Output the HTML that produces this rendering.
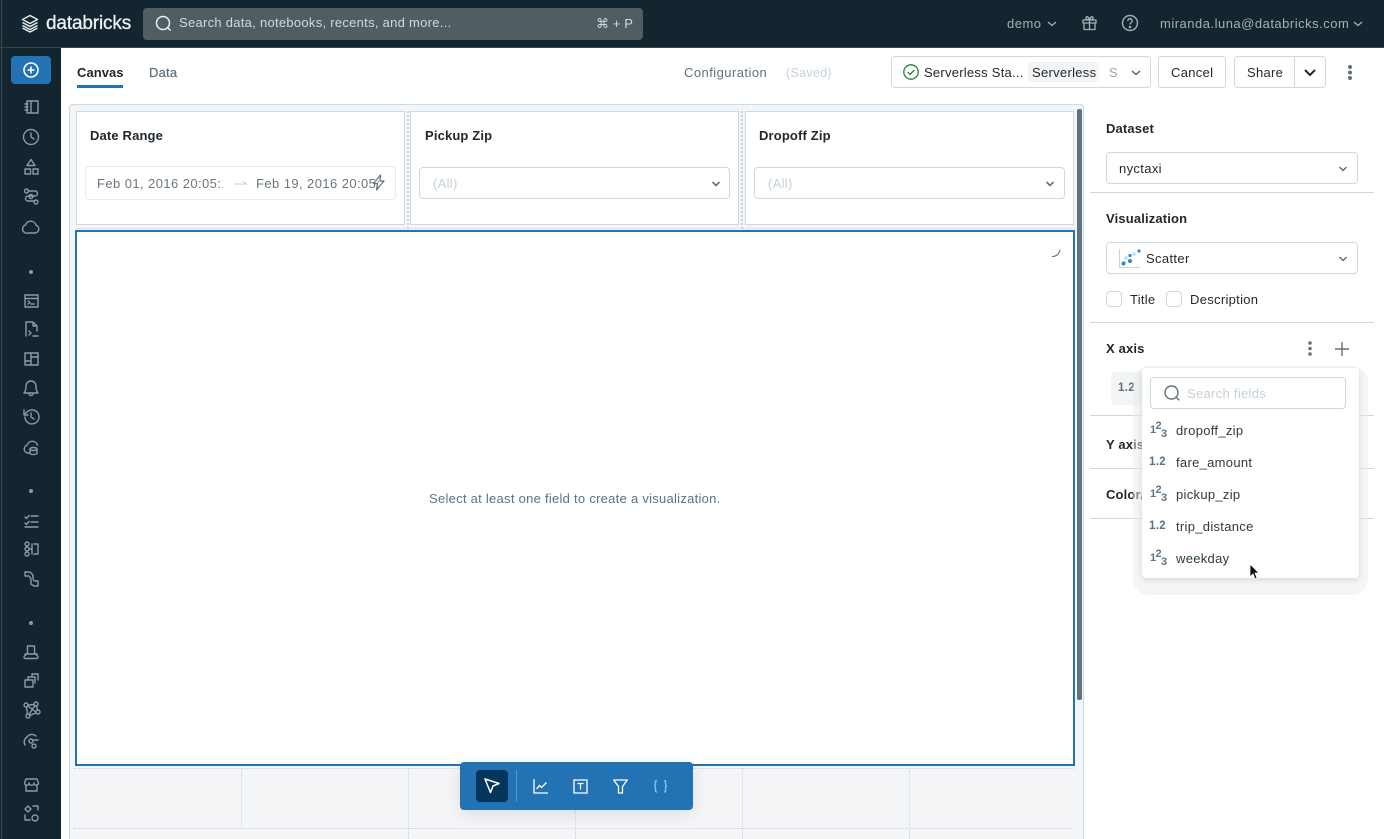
<!DOCTYPE html>
<html><head><meta charset="utf-8"><style>
*{box-sizing:border-box}
html,body{margin:0;padding:0;width:1384px;height:839px;overflow:hidden;background:#fff;font-family:"Liberation Sans",sans-serif;font-size:13px;color:#11171c}
#root{position:relative;width:1384px;height:839px;overflow:hidden;background:#fff}
.a{position:absolute}
.t{position:absolute;white-space:nowrap;line-height:16px;letter-spacing:.3px}
.b{font-weight:700;letter-spacing:.15px}
.box{position:absolute;background:#fff;border:1px solid #cbd9e6;border-radius:4px}
svg{position:absolute;overflow:visible}
.si{fill:none;stroke:#8a9ba8;stroke-width:1.4;stroke-linecap:round;stroke-linejoin:round}
.f{color:#2b3a44}
.hl{position:absolute;height:1px;background:#cbd9e6;left:1090px;width:284px}
.vd{position:absolute;width:0;border-left:1px dotted #cdd3d9}
.hd{position:absolute;height:0;border-top:1px dotted #cdd3d9}
</style></head><body><div id="root">
<div class="a" style="left:0;top:0;width:1384px;height:47px;background:#13262f"></div>
<div class="a" style="left:0;top:47px;width:1384px;height:1px;background:#33454d"></div>
<div class="a" style="left:0;top:48px;width:61px;height:791px;background:#13262f"></div>
<div class="a" style="left:1px;top:0;width:1px;height:839px;background:#3c4c54"></div>

<!-- logo -->
<svg style="left:21px;top:14px" width="20" height="20" viewBox="0 0 20 20" fill="none" stroke="#e8ecef" stroke-width="1.5" stroke-linejoin="round"><path d="M1.5 5.5 9 1.500l7.500 4L9 9.500z"/><path d="M1.500 8.500 9 12.500l7.500-4M1.500 11.500 9 15.500l7.500-4M1.500 14 9 18l7.500-4"/></svg>
<div class="t" style="left:46px;top:12px;font-size:19px;line-height:24px;color:#eef1f3;letter-spacing:-.15px;-webkit-text-stroke:.3px #eef1f3">databricks</div>

<!-- search -->
<div class="a" style="left:143px;top:8px;width:500px;height:32px;background:#505d62;border-radius:4px"></div>
<svg style="left:155px;top:15px" width="18" height="18" viewBox="0 0 18 18" fill="none" stroke="#eef1f3" stroke-width="1.5"><circle cx="8" cy="8" r="6.500"/><path d="m12.600 12.600 3 3"/></svg>
<div class="t" style="left:179px;top:15px;color:#d4d9dc;letter-spacing:.28px">Search data, notebooks, recents, and more...</div>
<div class="t" style="left:596px;top:16px;color:#d4d9dc;letter-spacing:.1px;font-family:'Liberation Sans','DejaVu Sans',sans-serif">⌘ + P</div>

<!-- right header -->
<div class="t" style="left:1007px;top:16px;color:#a3b0b8;letter-spacing:.5px">demo</div>
<svg style="left:1047px;top:21px" width="10" height="6" fill="none" stroke="#a3b0b8" stroke-width="1.300"><path d="m1 1 4 3.500L9 1"/></svg>
<svg style="left:1082px;top:15px" width="16" height="16" viewBox="0 0 16 16" fill="none" stroke="#a3b0b8" stroke-width="1.300"><path d="M1 5h13v3H1zM2 8v6.500h11V8M7.500 5v9.500M7.500 5C5 5 3.500 4 4 2.500 5 .5 7 2.500 7.500 5c.5-2.500 2.500-4.500 3.500-2.500.5 1.500-1 2.500-3.500 2.500z"/></svg>
<svg style="left:1121px;top:14px" width="18" height="18" viewBox="0 0 18 18" fill="none" stroke="#a3b0b8" stroke-width="1.400"><circle cx="9" cy="9" r="7.500"/><path d="M6.800 7c0-3 4.400-3 4.400 0 0 1.800-2.200 1.700-2.200 3.500"/><circle cx="9" cy="13" r=".6"/></svg>
<div class="t" style="left:1160px;top:16px;color:#a3b0b8;letter-spacing:.5px">miranda.luna@databricks.com</div>
<svg style="left:1353px;top:21px" width="10" height="6" fill="none" stroke="#a3b0b8" stroke-width="1.300"><path d="m1 1 4 3.500L9 1"/></svg>

<!-- sidebar -->
<div class="a" style="left:11px;top:56px;width:40px;height:28px;background:#2272b4;border-radius:4px"></div>
<svg style="left:22px;top:61px" width="18" height="18" viewBox="0 0 18 18" fill="none" stroke="#fff" stroke-width="1.600"><circle cx="9" cy="9" r="7"/><path d="M9 5.500v7M5.500 9h7"/></svg>
<svg width="61" height="839" style="left:0;top:0" class="si">
<path d="M27 101h11v12H27zM31 101v12M25 104h3M25 107h3M25 110h3"/>
<circle cx="31" cy="137" r="7.500"/><path d="M31 133v4l3 2"/>
<path d="m31 159.500 4 6h-8zM25 169h5.500v5h-5.500zM33 169h5v5h-5z"/>
<path d="M28 191h7a2.500 2.500 0 0 1 0 5h-7a2.500 2.500 0 0 0 0 5h7"/><circle cx="26.500" cy="191" r="2"/><circle cx="31" cy="196.500" r="2"/><circle cx="36" cy="202" r="2"/>
<path d="M28 233h7a4 4 0 0 0 1-7.800 5.500 5.500 0 0 0-10.500-.2A4 4 0 0 0 28 233z"/>
<path d="M25 295h13v12H25zM25 298.500h13M28 301l2 1.500-2 1.500M31 304h3"/>
<path d="M37 331v-5l-4-4h-7v14M33 322v4h4M29 331l2 2-2 2M33 336h5"/>
<path d="M25 353h13v12H25zM31 353v12M31 357h7M25 361h6"/>
<path d="M31 381a5 5 0 0 0-5 5c0 4-1 6-2 7h14c-1-1-2-3-2-7a5 5 0 0 0-5-5zM29 394c.5 2 3.500 2 4 0"/>
<path d="M25 417a7 7 0 1 0 2-5l-3 3M24 410v5h4M31 413v4l3 2"/>
<path d="M30 453h-2a4 4 0 0 1-1-7.800 5.500 5.500 0 0 1 10.500 0"/><ellipse cx="33.500" cy="449" rx="3.500" ry="1.500"/><path d="M30 449v4c0 2 7 2 7 0v-4"/>
<path d="m25 517 1.500 1.500 2.500-3M25 523l1.500 1.500 2.500-3M31 516h7M31 522h7M25 527h13"/>
<circle cx="27" cy="544" r="2"/><circle cx="27" cy="549" r="2"/><circle cx="27" cy="554" r="2"/><path d="M29 549h3M32 544v10M34 544h4v10h-4"/>
<path d="M25 572h5l3 3v3c0 2 1 3 2 3h3v5h-4l-3-2v-5l-2-3h-4z"/>
<path d="M27.500 646h7v7l3 3c1 1 .5 2.500-1 2.500h-11c-1.500 0-2-1.500-1-2.500l3-3zM25 654h12"/>
<path d="M25 680h8v7h-8zM28 680v-3h7v6M32 677v-3h6v6"/>
<circle cx="26" cy="705" r="2"/><circle cx="36" cy="704" r="2"/><circle cx="38" cy="712" r="2"/><circle cx="28" cy="716" r="2"/><path d="M28 705 34 704.500M36.500 706l1 4M36 713l-6.500 2.500M26.500 707l1 7M28 706l8 6M29 714.500l6-9"/>
<path d="M25 745a6 6 0 0 1 2-8 6 6 0 0 1 9-1M34 740h4"/><circle cx="31" cy="741" r="2"/><circle cx="34" cy="746" r="2"/>
<path d="M26 779h11l1.500 4c0 3-4.500 3-4.500 0 0 3-5 3-5 0 0 3-4.500 3-4.500 0zM26 785v6h11v-6"/>
<path d="m28 806 3 3-3 3-3-3zM33 806h5v4M25 815v5h5"/><circle cx="35" cy="818" r="3"/>
</svg>
<svg width="61" height="839" style="left:0;top:0" fill="#8a9ba8"><circle cx="31" cy="272" r="2"/><circle cx="31" cy="491" r="2"/><circle cx="31" cy="623" r="2"/></svg>

<!-- tabs -->
<div class="t b" style="left:77px;top:65px;color:#1f272d;letter-spacing:.05px">Canvas</div>
<div class="a" style="left:77px;top:85px;width:46px;height:3px;background:#2272b4"></div>
<div class="t" style="left:149px;top:65px;color:#5f7281;-webkit-text-stroke:.25px #5f7281;letter-spacing:.2px">Data</div>
<div class="t" style="left:684px;top:65px;color:#5f7281;letter-spacing:.45px">Configuration</div>
<div class="t" style="left:786px;top:65px;color:#c4d0da;font-size:12.500px">(Saved)</div>

<!-- top buttons -->
<div class="box" style="left:891px;top:56px;width:260px;height:32px"></div>
<svg style="left:903px;top:64px" width="16" height="16" viewBox="0 0 16 16" fill="none" stroke="#277c43" stroke-width="1.300"><circle cx="8" cy="8" r="7.200"/><path d="m4.700 8.200 2.300 2.300 4.300-4.500"/></svg>
<div class="t" style="left:924px;top:65px;color:#1f272d;letter-spacing:.25px">Serverless Sta...</div>
<div class="a" style="left:1028px;top:62px;width:71px;height:20px;background:#f2f4f5;border-radius:4px"></div>
<div class="t" style="left:1032px;top:65px;color:#1f272d;letter-spacing:.3px">Serverless</div>
<div class="t" style="left:1109px;top:65px;color:#9aa5ad">S</div>
<svg style="left:1131px;top:70px" width="10" height="6" fill="none" stroke="#5f7281" stroke-width="1.500"><path d="m1 1 4 3.500L9 1"/></svg>
<div class="box" style="left:1158px;top:56px;width:68px;height:32px"></div>
<div class="t" style="left:1171px;top:65px;color:#1f272d;letter-spacing:.3px">Cancel</div>
<div class="box" style="left:1234px;top:56px;width:92px;height:32px"></div>
<div class="a" style="left:1294px;top:57px;width:1px;height:30px;background:#cbd9e6"></div>
<div class="t" style="left:1247px;top:65px;color:#1f272d;letter-spacing:.3px">Share</div>
<svg style="left:1304px;top:69px" width="12" height="8" fill="none" stroke="#1f272d" stroke-width="2"><path d="m1 1 5 5 5-5"/></svg>
<svg style="left:1347px;top:65px" width="6" height="16" fill="#5f7281"><circle cx="3" cy="2" r="2"/><circle cx="3" cy="7.500" r="2"/><circle cx="3" cy="13" r="2"/></svg>

<!-- canvas -->
<div class="a" style="left:69px;top:104px;width:1015px;height:745px;background:#f3f5f7;border:1px solid #cbd9e6;border-radius:4px"></div>
<div class="hd" style="left:74px;top:828px;width:1000px"></div>
<div class="hd" style="left:74px;top:768px;width:1000px"></div>
<div class="vd" style="left:241px;top:768px;height:60px"></div>
<div class="vd" style="left:408px;top:768px;height:71px"></div>
<div class="vd" style="left:575px;top:768px;height:71px"></div>
<div class="vd" style="left:742px;top:768px;height:71px"></div>
<div class="vd" style="left:909px;top:768px;height:71px"></div>
<div class="hd" style="left:76px;top:228px;width:998px"></div>
<div class="vd" style="left:407px;top:111px;height:118px;border-left-width:2px"></div>
<div class="vd" style="left:741px;top:111px;height:118px;border-left-width:2px"></div>

<div class="a" style="left:76px;top:111px;width:329px;height:114px;background:#fff;border:1px solid #cbd9e6"></div>
<div class="a" style="left:410px;top:111px;width:329px;height:114px;background:#fff;border:1px solid #cbd9e6"></div>
<div class="a" style="left:745px;top:111px;width:329px;height:114px;background:#fff;border:1px solid #cbd9e6"></div>
<div class="t b" style="left:90px;top:128px;color:#1f272d">Date Range</div>
<div class="t b" style="left:425px;top:128px;color:#1f272d">Pickup Zip</div>
<div class="t b" style="left:759px;top:128px;color:#1f272d">Dropoff Zip</div>

<div class="box" style="left:85px;top:166px;width:311px;height:34px;border-color:#e8ecf0"></div>
<div class="t" style="left:97px;top:176px;width:126px;overflow:hidden;color:#6b7780;letter-spacing:.42px">Feb 01, 2016 20:05:18</div>
<svg style="left:234px;top:180px" width="13" height="6" fill="none" stroke="#c8ced3"><path d="M0 4h12L9 1"/></svg>
<div class="t" style="left:256px;top:176px;width:125px;overflow:hidden;color:#6b7780;letter-spacing:.42px">Feb 19, 2016 20:05:18</div>
<svg style="left:372px;top:174px" width="14" height="17" viewBox="0 0 14 17" fill="none" stroke="#5f7281" stroke-width="1.200" stroke-linejoin="round"><path d="M8.500 1 1.500 9.500h4l-1 6.500 7.500-9H8z"/></svg>
<div class="box" style="left:419px;top:167px;width:311px;height:32px"></div>
<div class="t" style="left:433px;top:176px;color:#c4d0da">(All)</div>
<svg style="left:711px;top:181px" width="10" height="6" fill="none" stroke="#5f7281" stroke-width="1.600"><path d="m1.500 1 3.500 3.500L8.500 1"/></svg>
<div class="box" style="left:754px;top:167px;width:311px;height:32px"></div>
<div class="t" style="left:768px;top:176px;color:#c4d0da">(All)</div>
<svg style="left:1045px;top:181px" width="10" height="6" fill="none" stroke="#5f7281" stroke-width="1.600"><path d="m1.500 1 3.500 3.500L8.500 1"/></svg>

<div class="a" style="left:75px;top:230px;width:1000px;height:536px;background:#fff;border:2px solid #2272b4"></div>
<svg style="left:1050px;top:247px" width="12" height="12" fill="none" stroke="#5f7281" stroke-width="1.100"><path d="M2 9.500c4 0 7.500-2.500 8-7"/></svg>
<div class="t" style="left:429px;top:491px;color:#5f7281;letter-spacing:.27px">Select at least one field to create a visualization.</div>
<div class="a" style="left:1077px;top:109px;width:5px;height:591px;background:#5f7281;border-radius:2px"></div>

<!-- toolbar -->
<div class="a" style="left:460px;top:762px;width:233px;height:48px;background:#2272b4;border-radius:4px;box-shadow:0 4px 16px rgba(0,0,0,.1)"></div>
<div class="a" style="left:476px;top:770px;width:32px;height:32px;background:#04355d;border-radius:4px"></div>
<div class="a" style="left:516px;top:770px;width:1px;height:32px;background:#5c97c9"></div>
<svg style="left:484px;top:778px" width="16" height="16" viewBox="0 0 16 16" fill="none" stroke="#fff" stroke-width="1.500" stroke-linejoin="round"><path d="m1 1 14 4.500-6 2.500-2.500 6.500z"/></svg>
<svg style="left:533px;top:779px" width="15" height="15" viewBox="0 0 15 15" fill="none" stroke="#fff" stroke-width="1.300"><path d="M1 0v14h14M3.500 10l3-3.500 2 2 5-5"/></svg>
<svg style="left:573px;top:779px" width="15" height="15" viewBox="0 0 15 15" fill="none" stroke="#fff" stroke-width="1.300"><path d="M1 1h13v13H1zM4.500 4.500h6M7.500 4.500v6"/></svg>
<svg style="left:613px;top:779px" width="15" height="15" viewBox="0 0 15 15" fill="none" stroke="#fff" stroke-width="1.300" stroke-linejoin="round"><path d="M.700 1h13.600L9.500 7.500V14h-4V7.500z"/></svg>
<svg style="left:653px;top:779px" width="15" height="15" viewBox="0 0 15 15" fill="none" stroke="#8cbce3" stroke-width="1.500"><path d="M4 1.500c-2 0-1.500 1.500-1.500 3S1.500 7 1 7c.5 0 1.500.500 1.500 2.500s-.500 3.500 1.500 3.500M11 1.500c2 0 1.500 1.500 1.500 3s1 2.500 1.500 2.500c-.5 0-1.500.500-1.500 2.500s.5 3.500-1.500 3.500"/></svg>

<!-- right panel -->
<div class="t b" style="left:1106px;top:121px;color:#1f272d">Dataset</div>
<div class="box" style="left:1106px;top:152px;width:252px;height:32px"></div>
<div class="t" style="left:1119px;top:161px;color:#1f272d;letter-spacing:.35px">nyctaxi</div>
<svg style="left:1338px;top:166px" width="10" height="6" fill="none" stroke="#5f7281" stroke-width="1.500"><path d="m1.500 1 3.500 3.500L8.500 1"/></svg>
<div class="hl" style="top:192px"></div>
<div class="t b" style="left:1106px;top:211px;color:#1f272d">Visualization</div>
<div class="box" style="left:1106px;top:242px;width:252px;height:32px"></div>
<svg style="left:1119px;top:249px" width="22" height="20" viewBox="0 0 22 20"><path d="M.500 0v18.500H21" fill="none" stroke="#cfd6db" stroke-width="1.200"/><g fill="#cfe3f4"><circle cx="7" cy="9" r="2"/><circle cx="15" cy="5" r="2"/><circle cx="6" cy="13" r="1.500"/></g><g fill="#2b87d1"><circle cx="4.500" cy="14.500" r="2"/><circle cx="11" cy="12" r="2"/><circle cx="11" cy="6.500" r="1.600"/><circle cx="20" cy="2" r="1.600"/></g></svg>
<div class="t" style="left:1146px;top:251px;color:#1f272d;letter-spacing:.35px">Scatter</div>
<svg style="left:1338px;top:256px" width="10" height="6" fill="none" stroke="#5f7281" stroke-width="1.500"><path d="m1.500 1 3.500 3.500L8.500 1"/></svg>
<div class="box" style="left:1106px;top:291px;width:16px;height:16px"></div>
<div class="t" style="left:1130px;top:292px;color:#1f272d;letter-spacing:.25px">Title</div>
<div class="box" style="left:1166px;top:291px;width:16px;height:16px"></div>
<div class="t" style="left:1190px;top:292px;color:#1f272d;letter-spacing:.3px">Description</div>
<div class="hl" style="top:322px"></div>

<div class="t b" style="left:1106px;top:341px;color:#1f272d">X axis</div>
<svg style="left:1307px;top:341px" width="6" height="16" fill="#5f7281"><circle cx="3" cy="2" r="1.800"/><circle cx="3" cy="7.500" r="1.800"/><circle cx="3" cy="13" r="1.800"/></svg>
<svg style="left:1334px;top:341px" width="16" height="16" fill="none" stroke="#5f7281" stroke-width="1.400"><path d="M8 1v14M1 8h14"/></svg>
<div class="a" style="left:1111px;top:372px;width:40px;height:33px;background:#f2f4f5;border-radius:4px"></div>
<div class="t b" style="left:1118px;top:380px;color:#5f7281;font-size:11.500px;letter-spacing:.3px">1.2</div>
<div class="hl" style="top:415px"></div>
<div class="t b" style="left:1106px;top:437px;color:#1f272d">Y axis</div>
<div class="hl" style="top:468px"></div>
<div class="t b" style="left:1106px;top:487px;color:#1f272d">Color/Group</div>
<div class="hl" style="top:518px"></div>

<!-- popup -->
<div class="a" style="left:1133px;top:366px;width:235px;height:229px;background:rgba(232,235,238,.5);border-radius:16px"></div>
<div class="a" style="left:1142px;top:368px;width:217px;height:210px;background:#fff;border-radius:4px;box-shadow:0 2px 6px rgba(0,0,0,.12)"></div>
<div class="box" style="left:1150px;top:377px;width:196px;height:32px"></div>
<svg style="left:1164px;top:385px" width="16" height="16" fill="none" stroke="#5f7281" stroke-width="1.400"><circle cx="7.500" cy="7.500" r="6.500"/><path d="m12.200 12.200 3 3"/></svg>
<div class="t" style="left:1187px;top:386px;color:#c4d0da;letter-spacing:.3px">Search fields</div>

<svg style="left:1149px;top:422px" width="18" height="18" fill="#5f7281" font-family="Liberation Sans,sans-serif" font-weight="700"><text x="1" y="11" font-size="11">1</text><text x="6.500" y="7" font-size="11">2</text><text x="12" y="15" font-size="11">3</text></svg>
<div class="t f" style="left:1176px;top:423px;letter-spacing:.3px">dropoff_zip</div>
<svg style="left:1149px;top:454px" width="18" height="18" fill="#5f7281" font-family="Liberation Sans,sans-serif" font-weight="700"><text x="0" y="11" font-size="11.500" letter-spacing=".3">1.2</text></svg>
<div class="t f" style="left:1176px;top:455px;letter-spacing:.3px">fare_amount</div>
<svg style="left:1149px;top:486px" width="18" height="18" fill="#5f7281" font-family="Liberation Sans,sans-serif" font-weight="700"><text x="1" y="11" font-size="11">1</text><text x="6.500" y="7" font-size="11">2</text><text x="12" y="15" font-size="11">3</text></svg>
<div class="t f" style="left:1176px;top:487px;letter-spacing:.3px">pickup_zip</div>
<svg style="left:1149px;top:518px" width="18" height="18" fill="#5f7281" font-family="Liberation Sans,sans-serif" font-weight="700"><text x="0" y="11" font-size="11.500" letter-spacing=".3">1.2</text></svg>
<div class="t f" style="left:1176px;top:519px;letter-spacing:.3px">trip_distance</div>
<svg style="left:1149px;top:550px" width="18" height="18" fill="#5f7281" font-family="Liberation Sans,sans-serif" font-weight="700"><text x="1" y="11" font-size="11">1</text><text x="6.500" y="7" font-size="11">2</text><text x="12" y="15" font-size="11">3</text></svg>
<div class="t f" style="left:1176px;top:551px;letter-spacing:.3px">weekday</div>
<svg style="left:1249px;top:563px" width="12" height="18" viewBox="0 0 12 18"><path d="M1 1v13l3-3 2 5 2-1-2-5h4z" fill="#111" stroke="#fff" stroke-width=".8"/></svg>
</div></body></html>
